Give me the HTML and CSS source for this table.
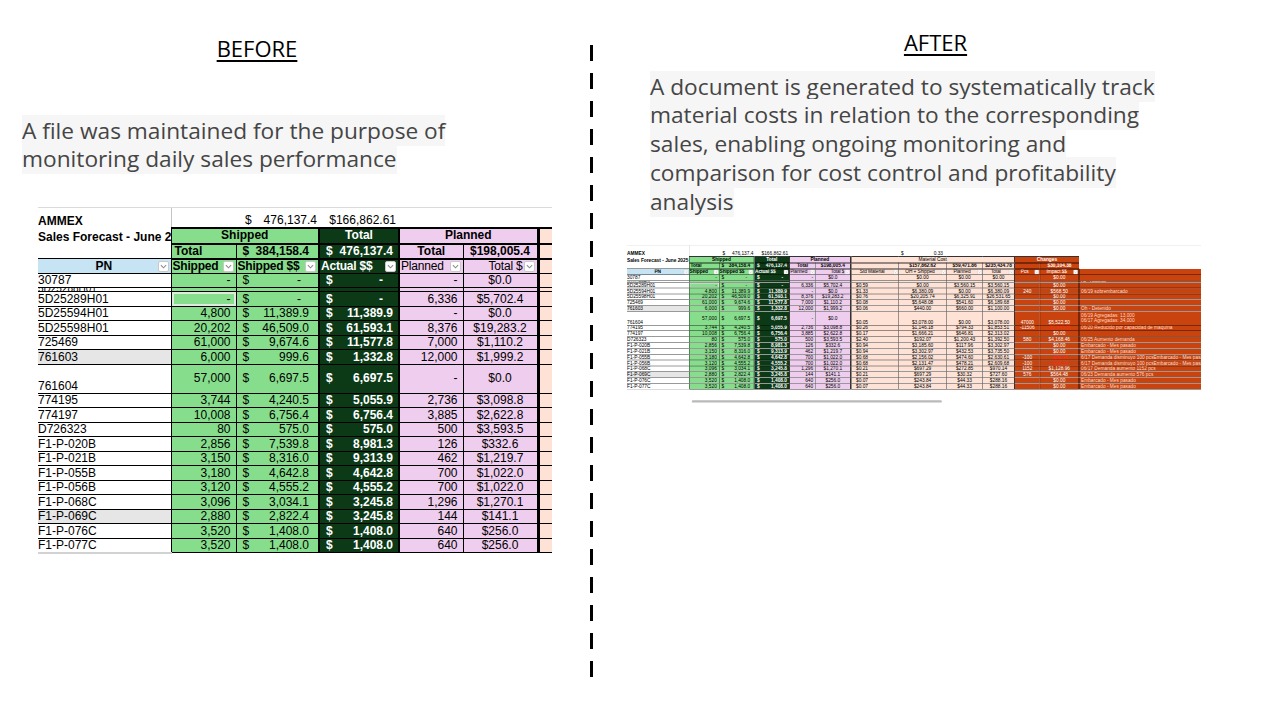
FILE: index.html
```html
<!DOCTYPE html>
<html lang="en">
<head>
<meta charset="utf-8">
<title>Before / After</title>
<link rel="stylesheet" href="styles.css">
</head>
<body>
<div class="page">
  <section class="col-left">
    <h2 class="title">BEFORE</h2>
    <p class="lead"><span>A file was maintained for the purpose of<br>monitoring daily sales performance</span></p>
    <div class="sheet-wrap">
      <table class="sheet">
        <colgroup><col class="w-pn"><col class="w-q"><col class="w-m"><col class="w-a"><col class="w-pq"><col class="w-t"><col class="w-x"></colgroup>
        <tbody>
          <tr class="top"><td class="pn b">AMMEX</td><td class="sel"></td><td class="m mt"><i>$</i>476,137.4</td><td class="r">$166,862.61</td><td></td><td></td><td></td></tr>
          <tr class="h1"><td class="pn b">Sales Forecast - June 2025</td><td class="g c b" colspan="2">Shipped</td><td class="dk c">Total</td><td class="pk c b" colspan="2">Planned</td><td class="pc xb"></td></tr>
          <tr class="h2"><td class="pn"></td><td class="g b">Total</td><td class="g m b"><i>$</i>384,158.4</td><td class="dk m a"><i>$</i>476,137.4</td><td class="pk c b">Total</td><td class="pk c b">$198,005.4</td><td class="pc xb"></td></tr>
          <tr class="h3"><td class="bl b"><div class="hd"><span class="sp"></span><span class="lb c">PN</span><span class="dd"><svg viewBox="0 0 8 5"><polyline points="1,1 4,4 7,1"/></svg></span></div></td><td class="g b"><div class="hd"><span class="lb">Shipped</span><span class="dd"><svg viewBox="0 0 8 5"><polyline points="1,1 4,4 7,1"/></svg></span></div></td><td class="g b"><div class="hd"><span class="lb">Shipped $$</span><span class="dd"><svg viewBox="0 0 8 5"><polyline points="1,1 4,4 7,1"/></svg></span></div></td><td class="dk"><div class="hd"><span class="lb">Actual $$</span><span class="dd"><svg viewBox="0 0 8 5"><polyline points="1,1 4,4 7,1"/></svg></span></div></td><td class="pk"><div class="hd"><span class="lb">Planned</span><span class="dd"><svg viewBox="0 0 8 5"><polyline points="1,1 4,4 7,1"/></svg></span></div></td><td class="pk"><div class="hd"><span class="lb r">Total $</span><span class="dd"><svg viewBox="0 0 8 5"><polyline points="1,1 4,4 7,1"/></svg></span></div></td><td class="pc xb"></td></tr>
          <tr class="d"><td class="pn">30787</td><td class="g q">-</td><td class="g m"><i>$</i><span class="z">-</span></td><td class="dk m a"><i>$</i><span class="z">-</span></td><td class="pk q">-</td><td class="pk c">$0.0</td><td class="pc xb"></td></tr>
          <tr class="sq"><td class="pn"><div class="sqc">5D25288H01</div></td><td class="g q"></td><td class="g m"></td><td class="dk m a"></td><td class="pk q"></td><td class="pk c"></td><td class="pc xb"></td></tr>
          <tr class="d"><td class="pn">5D25289H01</td><td class="g q selc">-</td><td class="g m"><i>$</i><span class="z">-</span></td><td class="dk m a"><i>$</i><span class="z">-</span></td><td class="pk q">6,336</td><td class="pk c">$5,702.4</td><td class="pc xb"></td></tr>
          <tr class="d"><td class="pn">5D25594H01</td><td class="g q">4,800</td><td class="g m"><i>$</i>11,389.9</td><td class="dk m a"><i>$</i>11,389.9</td><td class="pk q">-</td><td class="pk c">$0.0</td><td class="pc xb"></td></tr>
          <tr class="d"><td class="pn">5D25598H01</td><td class="g q">20,202</td><td class="g m"><i>$</i>46,509.0</td><td class="dk m a"><i>$</i>61,593.1</td><td class="pk q">8,376</td><td class="pk c">$19,283.2</td><td class="pc xb"></td></tr>
          <tr class="d"><td class="pn">725469</td><td class="g q">61,000</td><td class="g m"><i>$</i>9,674.6</td><td class="dk m a"><i>$</i>11,577.8</td><td class="pk q">7,000</td><td class="pk c">$1,110.2</td><td class="pc xb"></td></tr>
          <tr class="d"><td class="pn gy">761603</td><td class="g q">6,000</td><td class="g m"><i>$</i>999.6</td><td class="dk m a"><i>$</i>1,332.8</td><td class="pk q">12,000</td><td class="pk c">$1,999.2</td><td class="pc xb"></td></tr>
          <tr class="tall"><td class="pn">761604</td><td class="g q">57,000</td><td class="g m"><i>$</i>6,697.5</td><td class="dk m a"><i>$</i>6,697.5</td><td class="pk q">-</td><td class="pk c">$0.0</td><td class="pc xb"></td></tr>
          <tr class="d"><td class="pn">774195</td><td class="g q">3,744</td><td class="g m"><i>$</i>4,240.5</td><td class="dk m a"><i>$</i>5,055.9</td><td class="pk q">2,736</td><td class="pk c">$3,098.8</td><td class="pc xb"></td></tr>
          <tr class="d"><td class="pn">774197</td><td class="g q">10,008</td><td class="g m"><i>$</i>6,756.4</td><td class="dk m a"><i>$</i>6,756.4</td><td class="pk q">3,885</td><td class="pk c">$2,622.8</td><td class="pc xb"></td></tr>
          <tr class="d"><td class="pn">D726323</td><td class="g q">80</td><td class="g m"><i>$</i>575.0</td><td class="dk m a"><i>$</i>575.0</td><td class="pk q">500</td><td class="pk c">$3,593.5</td><td class="pc xb"></td></tr>
          <tr class="d"><td class="pn">F1-P-020B</td><td class="g q">2,856</td><td class="g m"><i>$</i>7,539.8</td><td class="dk m a"><i>$</i>8,981.3</td><td class="pk q">126</td><td class="pk c">$332.6</td><td class="pc xb"></td></tr>
          <tr class="d"><td class="pn">F1-P-021B</td><td class="g q">3,150</td><td class="g m"><i>$</i>8,316.0</td><td class="dk m a"><i>$</i>9,313.9</td><td class="pk q">462</td><td class="pk c">$1,219.7</td><td class="pc xb"></td></tr>
          <tr class="d"><td class="pn">F1-P-055B</td><td class="g q">3,180</td><td class="g m"><i>$</i>4,642.8</td><td class="dk m a"><i>$</i>4,642.8</td><td class="pk q">700</td><td class="pk c">$1,022.0</td><td class="pc xb"></td></tr>
          <tr class="d"><td class="pn">F1-P-056B</td><td class="g q">3,120</td><td class="g m"><i>$</i>4,555.2</td><td class="dk m a"><i>$</i>4,555.2</td><td class="pk q">700</td><td class="pk c">$1,022.0</td><td class="pc xb"></td></tr>
          <tr class="d"><td class="pn">F1-P-068C</td><td class="g q">3,096</td><td class="g m"><i>$</i>3,034.1</td><td class="dk m a"><i>$</i>3,245.8</td><td class="pk q">1,296</td><td class="pk c">$1,270.1</td><td class="pc xb"></td></tr>
          <tr class="d"><td class="pn gy">F1-P-069C</td><td class="g q">2,880</td><td class="g m"><i>$</i>2,822.4</td><td class="dk m a"><i>$</i>3,245.8</td><td class="pk q">144</td><td class="pk c">$141.1</td><td class="pc xb"></td></tr>
          <tr class="d"><td class="pn">F1-P-076C</td><td class="g q">3,520</td><td class="g m"><i>$</i>1,408.0</td><td class="dk m a"><i>$</i>1,408.0</td><td class="pk q">640</td><td class="pk c">$256.0</td><td class="pc xb"></td></tr>
          <tr class="d last"><td class="pn">F1-P-077C</td><td class="g q">3,520</td><td class="g m"><i>$</i>1,408.0</td><td class="dk m a"><i>$</i>1,408.0</td><td class="pk q">640</td><td class="pk c">$256.0</td><td class="pc xb"></td></tr>
        </tbody>
      </table>
    </div>
  </section>

  <div class="divider"></div>

  <section class="col-right">
    <h2 class="title">AFTER</h2>
    <p class="lead"><span>A document is generated to systematically track<br>material costs in relation to the corresponding<br>sales, enabling ongoing monitoring and<br>comparison for cost control and profitability<br>analysis</span></p>
    <div class="thumb">
      <div class="thumb-in">
        <table class="sheet">
          <colgroup><col class="w-pn"><col class="w-q"><col class="w-m"><col class="w-a"><col class="w-pq"><col class="w-t"><col class="w-std"><col class="w-cn"><col class="w-pl"><col class="w-tt"><col class="w-pcs"><col class="w-imp"><col class="w-nt"></colgroup>
          <tbody>
            <tr class="top"><td class="pn b">AMMEX</td><td class="sel"></td><td class="m mt"><i>$</i>476,137.4</td><td class="r">$166,862.61</td><td></td><td></td><td></td><td class="m"><i>$</i>0.33</td><td></td><td></td><td></td><td></td><td class="wh"></td></tr>
            <tr class="h1"><td class="pn b">Sales Forecast - June 2025</td><td class="g c b" colspan="2">Shipped</td><td class="dk c">Total</td><td class="pk c b" colspan="2">Planned</td><td class="pc xb c" colspan="4">Material Cost</td><td class="rd rb c b" colspan="2">Changes</td><td class="wh nb"></td></tr>
            <tr class="h2"><td class="pn"></td><td class="g b">Total</td><td class="g m b"><i>$</i>384,158.4</td><td class="dk m a"><i>$</i>476,137.4</td><td class="pk c b">Total</td><td class="pk c b">$198,005.4</td><td class="pc xb"></td><td class="pc c b">$157,862.62</td><td class="pc c b">$59,471.86</td><td class="pc c b">$235,434.78</td><td class="rd rb"></td><td class="rd b">$30,104.38</td><td class="wh nb"></td></tr>
            <tr class="h3"><td class="bl b"><div class="hd"><span class="sp"></span><span class="lb c">PN</span><span class="dd"><svg viewBox="0 0 8 5"><polyline points="1,1 4,4 7,1"/></svg></span></div></td><td class="g b"><div class="hd"><span class="lb">Shipped</span><span class="dd"><svg viewBox="0 0 8 5"><polyline points="1,1 4,4 7,1"/></svg></span></div></td><td class="g b"><div class="hd"><span class="lb">Shipped $$</span><span class="dd"><svg viewBox="0 0 8 5"><polyline points="1,1 4,4 7,1"/></svg></span></div></td><td class="dk"><div class="hd"><span class="lb">Actual $$</span><span class="dd"><svg viewBox="0 0 8 5"><polyline points="1,1 4,4 7,1"/></svg></span></div></td><td class="pk"><div class="hd"><span class="lb">Planned</span><span class="dd"><svg viewBox="0 0 8 5"><polyline points="1,1 4,4 7,1"/></svg></span></div></td><td class="pk"><div class="hd"><span class="lb r">Total $</span><span class="dd"><svg viewBox="0 0 8 5"><polyline points="1,1 4,4 7,1"/></svg></span></div></td><td class="pc xb"><div class="hd"><span class="lb c">Std Material</span><span class="dd"><svg viewBox="0 0 8 5"><polyline points="1,1 4,4 7,1"/></svg></span></div></td><td class="pc"><div class="hd"><span class="lb c">OH + Shipped</span><span class="dd"><svg viewBox="0 0 8 5"><polyline points="1,1 4,4 7,1"/></svg></span></div></td><td class="pc"><div class="hd"><span class="lb c">Planned</span><span class="dd"><svg viewBox="0 0 8 5"><polyline points="1,1 4,4 7,1"/></svg></span></div></td><td class="pc"><div class="hd"><span class="lb c">Total</span><span class="dd"><svg viewBox="0 0 8 5"><polyline points="1,1 4,4 7,1"/></svg></span></div></td><td class="rd rb"><div class="hd"><span class="lb c">Pcs</span><span class="dd"><svg viewBox="0 0 8 5"><polyline points="1,1 4,4 7,1"/></svg></span></div></td><td class="rd"><div class="hd"><span class="lb c">Impact $$</span><span class="dd"><svg viewBox="0 0 8 5"><polyline points="1,1 4,4 7,1"/></svg></span></div></td><td class="rd nt"></td></tr>
            <tr class="d"><td class="pn">30787</td><td class="g q">-</td><td class="g m"><i>$</i><span class="z">-</span></td><td class="dk m a"><i>$</i><span class="z">-</span></td><td class="pk q">-</td><td class="pk c">$0.0</td><td class="pc xb s"></td><td class="pc c">$0.00</td><td class="pc c">$0.00</td><td class="pc c">$0.00</td><td class="rd rb"></td><td class="rd">$0.00</td><td class="rd nt"></td></tr>
            <tr class="sq"><td class="pn"><div class="sqc">5D25288H01</div></td><td class="g q"></td><td class="g m"></td><td class="dk m a"></td><td class="pk q"></td><td class="pk c"></td><td class="pc xb s"></td><td class="pc c"></td><td class="pc c"></td><td class="pc c"></td><td class="rd rb"></td><td class="rd"></td><td class="rd nt"><div class="sqc">On - Detenido</div></td></tr>
            <tr class="d"><td class="pn">5D25289H01</td><td class="g q selc">-</td><td class="g m"><i>$</i><span class="z">-</span></td><td class="dk m a"><i>$</i><span class="z">-</span></td><td class="pk q">6,336</td><td class="pk c">$5,702.4</td><td class="pc xb s">$0.59</td><td class="pc c">$0.00</td><td class="pc c">$3,560.15</td><td class="pc c">$3,560.15</td><td class="rd rb"></td><td class="rd">$0.00</td><td class="rd nt"></td></tr>
            <tr class="d"><td class="pn">5D25594H01</td><td class="g q">4,800</td><td class="g m"><i>$</i>11,389.9</td><td class="dk m a"><i>$</i>11,389.9</td><td class="pk q">-</td><td class="pk c">$0.0</td><td class="pc xb s">$1.33</td><td class="pc c">$6,380.09</td><td class="pc c">$0.00</td><td class="pc c">$6,380.09</td><td class="rd rb">240</td><td class="rd">$568.50</td><td class="rd nt">06/19 sobrembarcado</td></tr>
            <tr class="d"><td class="pn">5D25598H01</td><td class="g q">20,202</td><td class="g m"><i>$</i>46,509.0</td><td class="dk m a"><i>$</i>61,593.1</td><td class="pk q">8,376</td><td class="pk c">$19,283.2</td><td class="pc xb s">$0.76</td><td class="pc c">$20,205.74</td><td class="pc c">$6,325.91</td><td class="pc c">$26,531.65</td><td class="rd rb"></td><td class="rd">$0.00</td><td class="rd nt"></td></tr>
            <tr class="d"><td class="pn">725469</td><td class="g q">61,000</td><td class="g m"><i>$</i>9,674.6</td><td class="dk m a"><i>$</i>11,577.8</td><td class="pk q">7,000</td><td class="pk c">$1,110.2</td><td class="pc xb s">$0.08</td><td class="pc c">$5,648.08</td><td class="pc c">$541.60</td><td class="pc c">$6,189.68</td><td class="rd rb"></td><td class="rd">$0.00</td><td class="rd nt"></td></tr>
            <tr class="d"><td class="pn gy">761603</td><td class="g q">6,000</td><td class="g m"><i>$</i>999.6</td><td class="dk m a"><i>$</i>1,332.8</td><td class="pk q">12,000</td><td class="pk c">$1,999.2</td><td class="pc xb s">$0.06</td><td class="pc c">$440.00</td><td class="pc c">$660.00</td><td class="pc c">$1,100.00</td><td class="rd rb"></td><td class="rd">$0.00</td><td class="rd nt">Oh - Detenido</td></tr>
            <tr class="tall"><td class="pn">761604</td><td class="g q">57,000</td><td class="g m"><i>$</i>6,697.5</td><td class="dk m a"><i>$</i>6,697.5</td><td class="pk q">-</td><td class="pk c">$0.0</td><td class="pc xb s vb">$0.05</td><td class="pc c vb">$3,078.00</td><td class="pc c vb">$0.00</td><td class="pc c vb">$3,078.00</td><td class="rd rb vb">47000</td><td class="rd vb">$5,522.50</td><td class="rd nt">06/19 Agregadas: 13,000<br>06/17 Agregadas: 34,000</td></tr>
            <tr class="d"><td class="pn">774195</td><td class="g q">3,744</td><td class="g m"><i>$</i>4,240.5</td><td class="dk m a"><i>$</i>5,055.9</td><td class="pk q">2,736</td><td class="pk c">$3,098.8</td><td class="pc xb s">$0.26</td><td class="pc c">$1,146.18</td><td class="pc c">$794.33</td><td class="pc c">$1,853.51</td><td class="rd rb">-11506</td><td class="rd neg">-$1,943.36</td><td class="rd nt">06/20 Reducido por capacidad de maquina</td></tr>
            <tr class="d"><td class="pn">774197</td><td class="g q">10,008</td><td class="g m"><i>$</i>6,756.4</td><td class="dk m a"><i>$</i>6,756.4</td><td class="pk q">3,885</td><td class="pk c">$2,622.8</td><td class="pc xb s">$0.17</td><td class="pc c">$1,666.21</td><td class="pc c">$646.81</td><td class="pc c">$2,313.02</td><td class="rd rb"></td><td class="rd">$0.00</td><td class="rd nt"></td></tr>
            <tr class="d"><td class="pn">D726323</td><td class="g q">80</td><td class="g m"><i>$</i>575.0</td><td class="dk m a"><i>$</i>575.0</td><td class="pk q">500</td><td class="pk c">$3,593.5</td><td class="pc xb s">$2.40</td><td class="pc c">$192.07</td><td class="pc c">$1,200.43</td><td class="pc c">$1,392.50</td><td class="rd rb">580</td><td class="rd">$4,168.46</td><td class="rd nt">06/25 Aumento demanda</td></tr>
            <tr class="d"><td class="pn">F1-P-020B</td><td class="g q">2,856</td><td class="g m"><i>$</i>7,539.8</td><td class="dk m a"><i>$</i>8,981.3</td><td class="pk q">126</td><td class="pk c">$332.6</td><td class="pc xb s">$0.94</td><td class="pc c">$3,185.60</td><td class="pc c">$117.96</td><td class="pc c">$3,302.97</td><td class="rd rb"></td><td class="rd">$0.00</td><td class="rd nt">Embarcado - Mes pasado</td></tr>
            <tr class="d"><td class="pn">F1-P-021B</td><td class="g q">3,150</td><td class="g m"><i>$</i>8,316.0</td><td class="dk m a"><i>$</i>9,313.9</td><td class="pk q">462</td><td class="pk c">$1,219.7</td><td class="pc xb s">$0.94</td><td class="pc c">$3,302.97</td><td class="pc c">$432.53</td><td class="pc c">$3,735.50</td><td class="rd rb"></td><td class="rd">$0.00</td><td class="rd nt">Embarcado - Mes pasado</td></tr>
            <tr class="d"><td class="pn">F1-P-055B</td><td class="g q">3,180</td><td class="g m"><i>$</i>4,642.8</td><td class="dk m a"><i>$</i>4,642.8</td><td class="pk q">700</td><td class="pk c">$1,022.0</td><td class="pc xb s">$0.68</td><td class="pc c">$2,156.02</td><td class="pc c">$474.60</td><td class="pc c">$2,630.61</td><td class="rd rb">-100</td><td class="rd neg">-$68.36</td><td class="rd nt">6/17 Demanda disminuyo 100 pcsEmbarcado - Mes pasado</td></tr>
            <tr class="d"><td class="pn">F1-P-056B</td><td class="g q">3,120</td><td class="g m"><i>$</i>4,555.2</td><td class="dk m a"><i>$</i>4,555.2</td><td class="pk q">700</td><td class="pk c">$1,022.0</td><td class="pc xb s">$0.68</td><td class="pc c">$2,131.47</td><td class="pc c">$478.21</td><td class="pc c">$2,609.68</td><td class="rd rb">-100</td><td class="rd neg">-$68.36</td><td class="rd nt">6/17 Demanda disminuyo 100 pcsEmbarcado - Mes pasado</td></tr>
            <tr class="d"><td class="pn">F1-P-068C</td><td class="g q">3,096</td><td class="g m"><i>$</i>3,034.1</td><td class="dk m a"><i>$</i>3,245.8</td><td class="pk q">1,296</td><td class="pk c">$1,270.1</td><td class="pc xb s">$0.21</td><td class="pc c">$697.29</td><td class="pc c">$272.85</td><td class="pc c">$970.14</td><td class="rd rb">1152</td><td class="rd">$1,128.96</td><td class="rd nt">06/17 Demanda aumento 1152 pcs</td></tr>
            <tr class="d"><td class="pn gy">F1-P-069C</td><td class="g q">2,880</td><td class="g m"><i>$</i>2,822.4</td><td class="dk m a"><i>$</i>3,245.8</td><td class="pk q">144</td><td class="pk c">$141.1</td><td class="pc xb s">$0.21</td><td class="pc c">$697.29</td><td class="pc c">$30.32</td><td class="pc c">$727.60</td><td class="rd rb">576</td><td class="rd">$564.48</td><td class="rd nt">06/23 Demanda aumento 576 pcs</td></tr>
            <tr class="d"><td class="pn">F1-P-076C</td><td class="g q">3,520</td><td class="g m"><i>$</i>1,408.0</td><td class="dk m a"><i>$</i>1,408.0</td><td class="pk q">640</td><td class="pk c">$256.0</td><td class="pc xb s">$0.07</td><td class="pc c">$243.84</td><td class="pc c">$44.33</td><td class="pc c">$288.16</td><td class="rd rb"></td><td class="rd">$0.00</td><td class="rd nt">Embarcado - Mes pasado</td></tr>
            <tr class="d last"><td class="pn">F1-P-077C</td><td class="g q">3,520</td><td class="g m"><i>$</i>1,408.0</td><td class="dk m a"><i>$</i>1,408.0</td><td class="pk q">640</td><td class="pk c">$256.0</td><td class="pc xb s">$0.07</td><td class="pc c">$243.84</td><td class="pc c">$44.33</td><td class="pc c">$288.16</td><td class="rd rb"></td><td class="rd">$0.00</td><td class="rd nt">Embarcado - Mes pasado</td></tr>
          </tbody>
        </table>
        <div class="scroll"><div class="scroll-thumb"></div></div>
      </div>
    </div>
  </section>
</div>
</body>
</html>
```

FILE: styles.css
```css
* { box-sizing: border-box; }
html, body { margin: 0; padding: 0; }
body {
  width: 1280px;
  height: 720px;
  overflow: hidden;
  background: #fff;
  font-family: "Open Sans", "Noto Sans", sans-serif;
}
.page { display: flex; height: 720px; }

.col-left { width: 590px; flex: none; padding: 34px 0 0 22px; }
.col-right { flex: 1; min-width: 0; padding-top: 28px; }
.divider {
  flex: none;
  width: 3px;
  height: 632px;
  margin-top: 45px;
  background: repeating-linear-gradient(to bottom, #000 0 16px, transparent 16px 28px);
}

.title {
  margin: 0;
  font-weight: 400;
  font-size: 22px;
  line-height: 28px;
  color: #000;
  text-align: center;
  text-decoration: underline;
  text-decoration-thickness: 1.5px;
  text-underline-offset: 3px;
}
.col-left .title { width: 470px; }
.col-right .title { width: 685px; }

.lead { margin: 0; color: #454545; font-size: 22.7px; line-height: 28px; white-space: nowrap; }
.lead span { background: #f6f6f6; -webkit-box-decoration-break: clone; box-decoration-break: clone; }
.col-left .lead { margin-top: 55px; }
.col-right .lead { margin: 16.6px 0 0 57px; line-height: 28.75px; }

.sheet-wrap { margin: 34px 0 0 16px; }
.sheet-wrap .sheet { width: 514px; }

/* spreadsheet */
.sheet {
  border-collapse: collapse;
  table-layout: fixed;
  font-family: "Liberation Sans", Arial, sans-serif;
  font-size: 12px;
  color: #000;
}
.w-pn { width: 133px; }
.w-q { width: 65px; }
.w-m { width: 83px; }
.w-a { width: 80px; }
.w-pq { width: 64px; }
.w-t { width: 75px; }
.w-x { width: 14px; }

.sheet td {
  padding: 0 3px;
  white-space: nowrap;
  overflow: hidden;
  vertical-align: bottom;
  line-height: 13px;
}
.sheet tr.top { height: 20px; }
.sheet tr.h1 { height: 16px; }
.sheet tr.h2 { height: 14px; }
.sheet tr.h3 { height: 15px; }
.sheet tr.d { height: 14.47px; }
.sheet tr.sq { height: 4px; }
.sheet tr.tall { height: 29px; }

.sheet tr.top td { border-top: 1px solid #dadada; }
.sheet td.sel { border-top: 2px solid #5dbf68; border-left: 1px solid #c4c4c4; }
.sheet tr.h1 td, .sheet tr.h2 td, .sheet tr.h3 td { vertical-align: middle; }
.sheet tr.h1 td.pn { vertical-align: bottom; }
.sheet tr.h1 td:not(.pn) { border-top: 2px solid #000; border-bottom: 2px solid #000; }
.sheet tr.h2 td:not(.pn) { border-bottom: 2px solid #000; }
.sheet tr.h3 td { border-bottom: 1px solid #000; padding: 0 2px 0 1px; }
.sheet tr.d td, .sheet tr.sq td, .sheet tr.tall td { border-bottom: 1px solid #000; }
.sheet tr.tall td { vertical-align: middle; }
.sheet tr.tall td.pn, .sheet tr.tall td.vb { vertical-align: bottom; }
.sheet tr.last td.pn { border-bottom: 2px solid #d2d2d2; }

.pn { padding-left: 0 !important; }
.b { font-weight: 700; }
.c { text-align: center; }
.r { text-align: right; }

.g { background: #86de8c; border-left: 1px solid #000; }
.dk { background: #0c3a17; color: #fff; font-weight: 700; border-left: 2px solid #000; border-right: 2px solid #000; }
.pk { background: #efcdee; border-left: 1px solid #000; }
.pc { background: #fde2d5; border-left: 1px solid #000; }
.bl { background: #c7e4f5; border-top: 1px solid #000; }
.gy { background: #e6e6e6; }
.xb { border-left: 3px solid #000; }
.selc { box-shadow: inset 0 0 0 2px #dfe9df; }

.sheet td.q { text-align: right; padding-right: 5px; }
.sheet td.m { text-align: right; padding: 0 9px 0 6px; }
.sheet td.m.a { padding: 0 5px 0 6px; }
.sheet td.mt { padding-left: 9px; padding-right: 2px; }
.m i { float: left; font-style: normal; }
.z { padding-right: 8px; }
.m.a .z { padding-right: 10px; }

.sqc { height: 3px; overflow: hidden; line-height: 2px; font-size: 10px; }

.hd { display: flex; align-items: center; gap: 1px; }
.hd .lb { flex: 1; min-width: 0; overflow: hidden; letter-spacing: -0.2px; }
.hd .sp { width: 11px; flex: none; }
.dd {
  flex: none;
  display: inline-flex;
  align-items: center;
  justify-content: center;
  width: 11px;
  height: 11px;
  border: 1px solid #c9c9c9;
  border-radius: 2px;
  background: #fff;
}
.dd svg { width: 7px; height: 5px; fill: none; stroke: #8c8c8c; stroke-width: 1.2; }

/* after thumbnail */
.thumb { margin: 28.6px 0 0 34px; width: 575px; height: 160px; overflow: hidden; }
.thumb-in { width: 1435px; transform: scale(0.4); transform-origin: 0 0; }
.thumb .sheet { width: 1435px; }
.thumb .w-pn { width: 155px; }
.thumb .w-q { width: 75px; }
.thumb .w-m { width: 88px; }
.thumb .w-a { width: 88px; }
.thumb .w-pq { width: 65px; }
.thumb .w-t { width: 88px; }
.thumb .w-std { width: 120px; }
.thumb .w-cn { width: 120px; }
.thumb .w-pl { width: 90px; }
.thumb .w-tt { width: 80px; }
.thumb .w-pcs { width: 63px; }
.thumb .w-imp { width: 98px; }
.thumb .w-nt { width: 305px; }
.thumb .sheet tr.top { height: 28px; }
.thumb .sheet tr.d { height: 14.6px; }
.thumb .sheet tr.tall { height: 34px; }
.thumb .sheet td.s { padding-left: 12px; }

.rd { background: #c8430e; color: #fff; text-align: center; border-left: 1px solid #5e1a00; }
.rb { border-left: 2px solid #000; }
.sheet td.nt { text-align: left; color: #ffd9c4; border-left: 2px solid #000; padding-left: 4px; }
.sheet tr.tall td.nt { line-height: 13px; vertical-align: middle; }
.neg { color: #ff2a1a; }
.wh { background: #fff; }
.sheet tr.h1 td.nb, .sheet tr.h2 td.nb { border: none; }

.scroll { margin-top: 26px; height: 6px; width: 1435px; }
.scroll-thumb { margin-left: 162px; width: 625px; height: 6px; background: #b9b9b9; border-radius: 3px; }
```
